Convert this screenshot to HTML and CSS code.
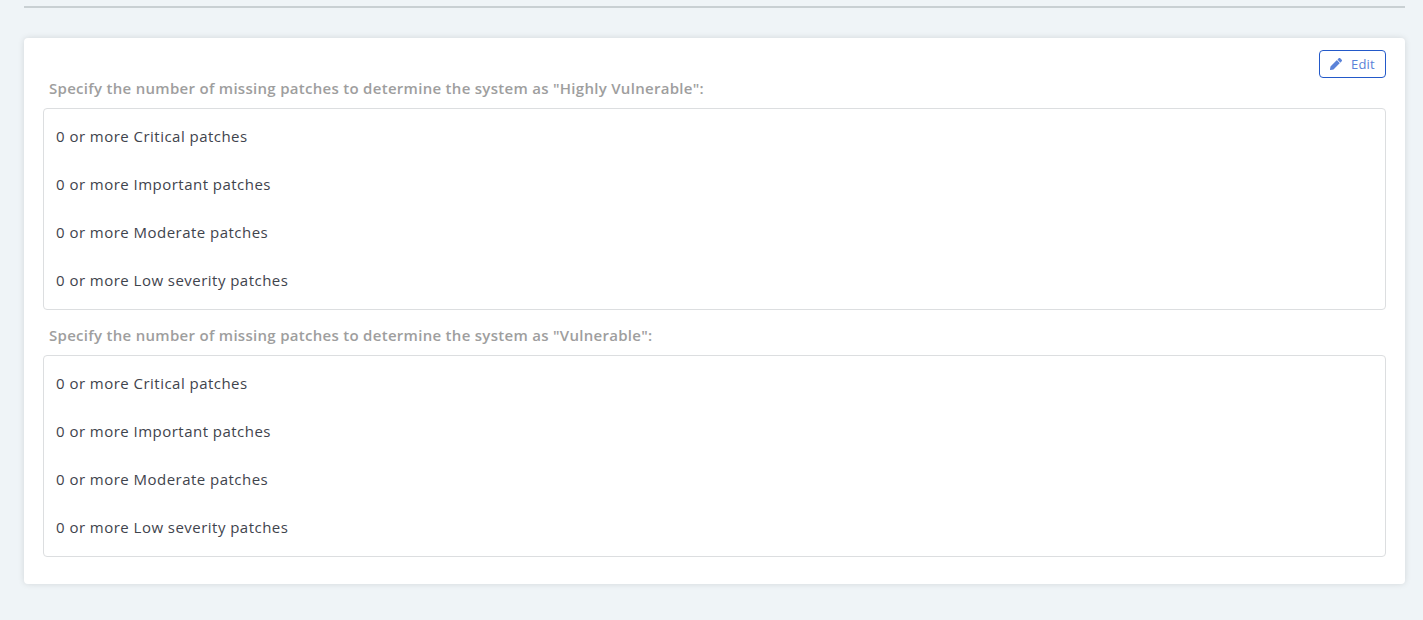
FILE: index.html
```html
<!DOCTYPE html>
<html lang="en">
<head>
<meta charset="utf-8">
<title>Vulnerability settings</title>
<link rel="stylesheet" href="styles.css">
</head>
<body>
<div class="page">
  <hr class="rule">
  <section class="card">
    <div class="toolbar">
      <button class="edit-btn" type="button">
        <svg class="edit-icon" viewBox="0 0 512 512" width="12" height="12" aria-hidden="true"><path fill="currentColor" d="M497.9 142.1l-46.1 46.1c-4.7 4.7-12.3 4.7-17 0l-111-111c-4.7-4.7-4.7-12.3 0-17l46.1-46.1c18.7-18.7 49.1-18.7 67.900 0l60.100 60.100c18.800 18.700 18.800 49.100 0 67.900zM284.200 99.800L21.600 362.400.4 483.900c-2.900 16.400 11.400 30.600 27.800 27.800l121.500-21.300 262.600-262.600c4.700-4.700 4.700-12.300 0-17l-111-111c-4.800-4.700-12.400-4.700-17.100 0z"/></svg>
        <span>Edit</span>
      </button>
    </div>
    <h2 class="group-title">Specify the number of missing patches to determine the system as "Highly Vulnerable":</h2>
    <ul class="group-box">
      <li>0 or more Critical patches</li>
      <li>0 or more Important patches</li>
      <li>0 or more Moderate patches</li>
      <li>0 or more Low severity patches</li>
    </ul>
    <h2 class="group-title">Specify the number of missing patches to determine the system as "Vulnerable":</h2>
    <ul class="group-box">
      <li>0 or more Critical patches</li>
      <li>0 or more Important patches</li>
      <li>0 or more Moderate patches</li>
      <li>0 or more Low severity patches</li>
    </ul>
  </section>
</div>
</body>
</html>
```
FILE: styles.css
```css
* { box-sizing: border-box; }
html, body { margin: 0; padding: 0; height: 100%; }
body {
  background: #eff4f7;
  font-family: "Open Sans", "Lato", sans-serif;
  overflow: hidden;
}
.page { padding: 6px 18px 0 24px; }
.rule {
  height: 2px;
  margin: 0 0 30px;
  border: 0;
  background: #c9d0d3;
}
.card {
  height: 546px;
  padding: 12px 19px 0;
  background: #fff;
  border-radius: 4px;
  box-shadow: 0 0 6px rgba(0, 0, 0, 0.12);
}
.toolbar {
  display: flex;
  justify-content: flex-end;
  height: 28px;
}
.edit-btn {
  display: flex;
  align-items: center;
  justify-content: flex-start;
  gap: 9px;
  width: 67px;
  height: 28px;
  padding: 0 0 0 10px;
  color: #2359c9;
  background: #fff;
  border: 1px solid #2359c9;
  border-radius: 4px;
  font: 400 13px "Open Sans", sans-serif;
  letter-spacing: 0.2px;
}
.edit-btn span { color: #5a82d8; }
.edit-icon { color: #5a82d8; }
.group-title {
  height: 18px;
  margin: 4px 0 8px;
  padding-left: 6px;
  color: #9e9e9e;
  font-size: 15px;
  font-weight: 600;
  letter-spacing: 0.29px;
  line-height: 12px;
}
.group-box {
  height: 202px;
  margin: 0 0 19px;
  padding: 5px 12px 0;
  list-style: none;
  border: 1px solid #dcdee0;
  border-radius: 4px;
}
.group-box li {
  height: 48px;
  color: #3f444d;
  font-size: 15px;
  letter-spacing: 0.47px;
  line-height: 44px;
}
```
